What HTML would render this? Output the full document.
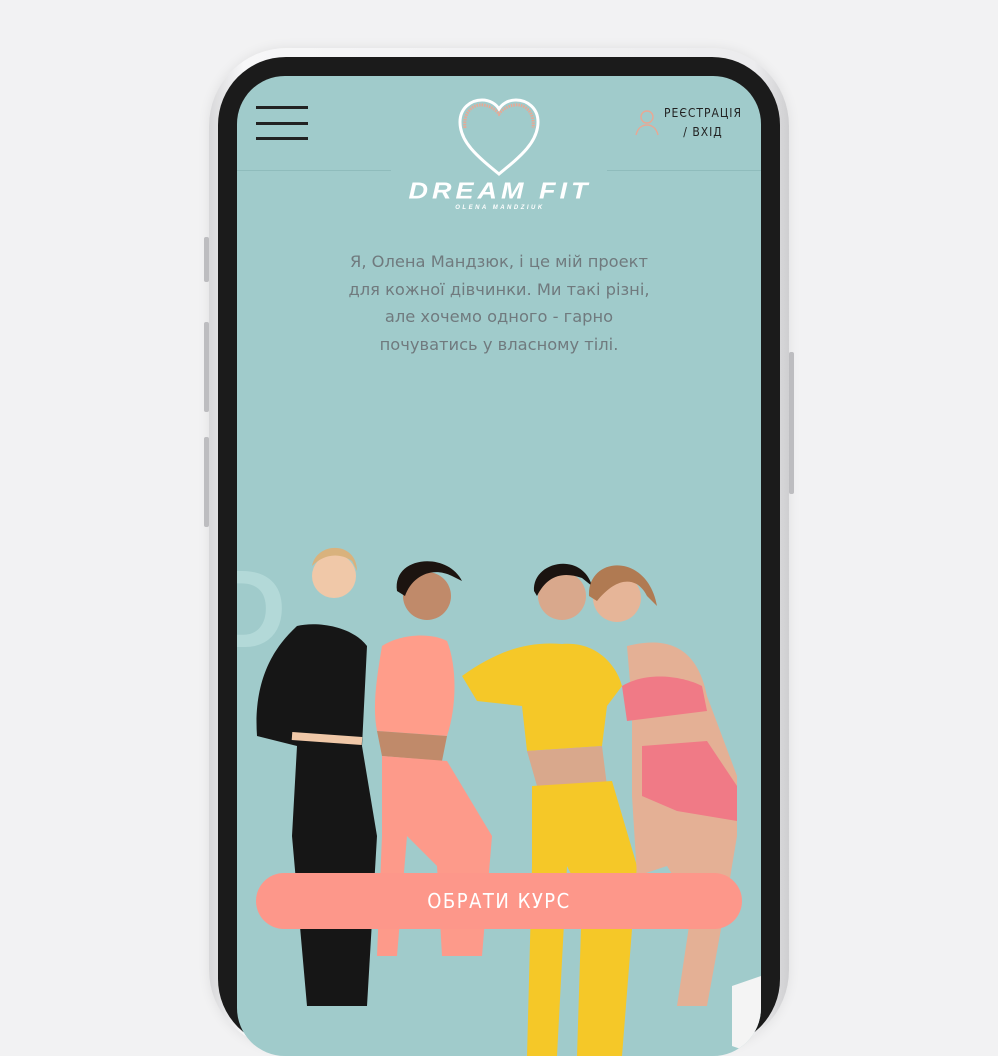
<!DOCTYPE html>
<html><head><meta charset="utf-8"><style>
html,body{margin:0;width:998px;height:998px;overflow:hidden;background:#f2f2f3;font-family:"Liberation Sans","DejaVu Sans",sans-serif}
.body{position:absolute;left:209px;top:48px;width:580px;height:1000px;border-radius:78px;background:linear-gradient(90deg,#d8d8da,#f7f7f8 6%,#ececee 94%,#cfcfd1);box-shadow:0 0 12px rgba(0,0,0,.08)}
.bez{position:absolute;left:218px;top:57px;width:562px;height:990px;border-radius:68px;background:#1b1b1b}
.scr{position:absolute;left:237px;top:76px;width:524px;height:980px;border-radius:48px;background:#a0cbcb;overflow:hidden}
.btnside{position:absolute;background:#bdbdc0;width:5px;border-radius:2px}
.hl{position:absolute;height:3px;width:52px;left:19px;background:#222}
.line{position:absolute;top:94px;height:1px;background:#8fbcbc}
p.t{position:absolute;top:172px;left:0;width:524px;text-align:center;margin:0;color:#707a7e;font-size:16.3px;line-height:27.7px;font-family:"DejaVu Sans",sans-serif}
.cta{position:absolute;left:19px;top:797px;width:486px;height:56px;border-radius:28px;background:#fd978a;color:#fff;text-align:center;line-height:56px;font-size:20px;letter-spacing:1.5px;font-family:"DejaVu Sans Condensed","DejaVu Sans",sans-serif}
</style></head><body>
<div class="body"></div>
<div class="btnside" style="left:204px;top:237px;height:45px"></div>
<div class="btnside" style="left:204px;top:322px;height:90px"></div>
<div class="btnside" style="left:204px;top:437px;height:90px"></div>
<div class="btnside" style="left:789px;top:352px;height:142px"></div>
<div class="bez"></div>
<div class="scr">
 <div class="hl" style="top:30px"></div><div class="hl" style="top:46px"></div><div class="hl" style="top:61px"></div>
 <div class="line" style="left:0;width:154px"></div><div class="line" style="left:370px;width:154px"></div>
 <svg style="position:absolute;left:220px;top:22px" width="84" height="80" viewBox="0 0 84 80"><path d="M42 76 C20 58 3 44 3 24 C3 10 14 2 25 2 C33 2 39 6 42 11 C45 6 51 2 59 2 C70 2 81 10 81 24 C81 44 64 58 42 76Z" fill="none" stroke="#fff" stroke-width="3"/><path d="M8 30 C6 14 16 6 26 7 C34 8 39 12 42 16 C45 12 50 8 58 7 C68 6 78 14 76 30" fill="none" stroke="#e8a894" stroke-width="3" stroke-dasharray="1.5 1"/></svg>
 <div style="position:absolute;left:160px;top:100px;width:206px;text-align:center;color:#fff;font-weight:bold;font-style:italic;font-size:27px;letter-spacing:4px;transform:scaleY(.85)">DREAM FIT</div>
 <div style="position:absolute;left:170px;top:129px;width:186px;text-align:center;color:#fff;font-weight:bold;font-style:italic;font-size:6px;letter-spacing:2.5px">OLENA MANDZIUK</div>
 <svg style="position:absolute;left:397px;top:32px" width="26" height="28" viewBox="0 0 26 28"><circle cx="13" cy="9" r="6" fill="none" stroke="#e8a894" stroke-width="1.4"/><path d="M2 27 C4 19 9 17 13 17 C17 17 22 19 24 27" fill="none" stroke="#e8a894" stroke-width="1.4"/></svg>
 <div style="position:absolute;left:426px;top:28px;width:80px;text-align:center;font-size:12px;line-height:19px;letter-spacing:1px;color:#222;font-family:'DejaVu Sans Condensed',sans-serif">РЕЄСТРАЦІЯ<br>/ ВХІД</div>
 <p class="t">Я, Олена Мандзюк, і це мій проект<br>для кожної дівчинки. Ми такі різні,<br>але хочемо одного - гарно<br>почуватись у власному тілі.</p>
 <div style="position:absolute;left:-30px;top:470px;font-size:110px;font-weight:bold;color:#b3d9d8">D</div>
 <svg style="position:absolute;left:0;top:460px" width="524" height="520" viewBox="0 0 524 520">
  <circle cx="97" cy="40" r="22" fill="#f0c8a8"/><path d="M75 30 C80 5 120 5 120 35 L115 25 C100 15 85 20 75 30Z" fill="#d9b27d"/>
  <path d="M60 90 C50 100 15 130 20 200 L60 210 L55 300 L70 470 L130 470 L140 300 L125 210 L130 110 C115 90 80 85 60 90Z" fill="#161616"/>
  <path d="M55 200 L125 205" stroke="#f0c8a8" stroke-width="8"/>
  <circle cx="190" cy="60" r="24" fill="#c08a6a"/><path d="M160 55 C155 20 210 15 225 45 L215 40 C195 30 175 40 168 60Z" fill="#1c1410"/>
  <path d="M145 110 C140 140 135 170 140 195 L210 200 C220 170 220 130 210 105 C190 95 160 100 145 110Z" fill="#ff9d8a"/>
  <path d="M140 195 L210 200 L205 225 L145 220Z" fill="#c08a6a"/>
  <path d="M145 220 L210 225 L255 300 L245 420 L205 420 L200 330 L170 300 L160 420 L140 420 L145 300Z" fill="#fd9a8a"/>
  <circle cx="325" cy="60" r="24" fill="#d9a88c"/><path d="M297 55 C295 25 345 15 355 50 L345 42 C325 35 310 40 300 60Z" fill="#1a1310"/>
  <path d="M225 140 C260 115 290 105 325 108 C360 105 380 130 385 150 L370 170 L365 210 L290 215 L285 170 L240 165Z" fill="#f5c828"/>
  <path d="M290 215 L365 210 L370 250 L300 250Z" fill="#d9a88c"/>
  <path d="M295 250 L375 245 L400 330 L385 520 L340 520 L345 360 L330 330 L320 520 L290 520 L295 330Z" fill="#f5c828"/>
  <circle cx="380" cy="62" r="24" fill="#e6b598"/><path d="M352 60 C350 20 410 15 420 70 L410 60 C400 40 380 40 360 65Z" fill="#b07a52"/>
  <path d="M390 110 C430 100 460 110 470 160 L500 240 L500 300 L490 360 L470 470 L440 470 L455 370 L430 330 L400 340 L395 260 L395 170Z" fill="#e4b095"/>
  <path d="M385 150 C410 135 445 140 465 150 L470 175 L390 185Z" fill="#f07a86"/>
  <path d="M405 210 L470 205 L500 250 L500 285 L440 275 L405 260Z" fill="#f07a86"/>
  <path d="M495 450 L524 440 L524 520 L495 510Z" fill="#f4f4f4"/>
 </svg>
 <div class="cta">ОБРАТИ КУРС</div>
</div>
</body></html>
